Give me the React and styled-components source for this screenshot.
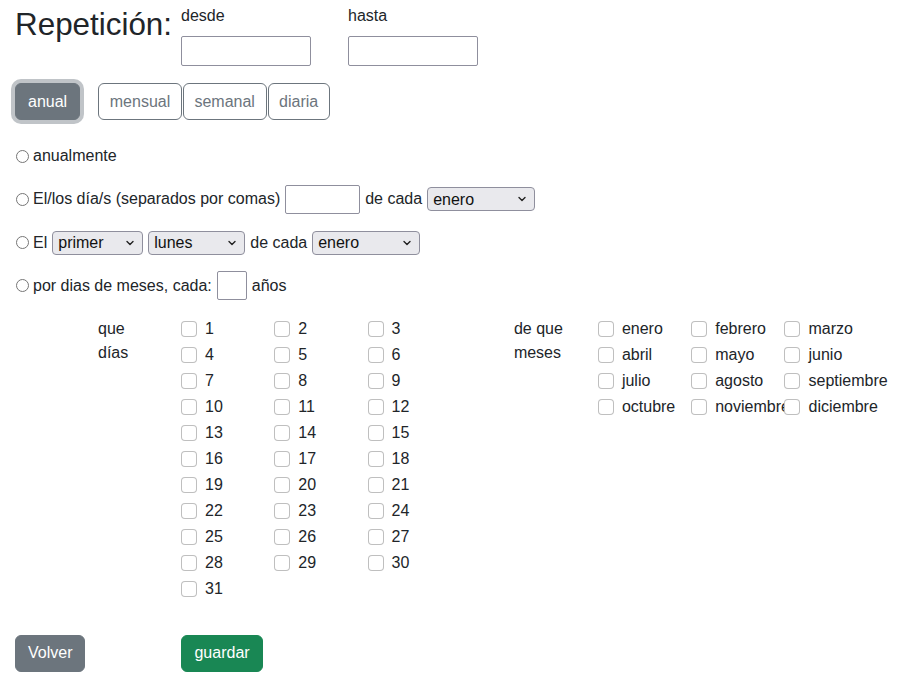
import React from 'react'
import styled, { createGlobalStyle } from 'styled-components'

const GlobalStyle = createGlobalStyle`
  html, body {
    margin: 0;
    padding: 0;
    background: #fff;
  }
  body {
    font-family: "Liberation Sans", Arial, sans-serif;
    font-size: 16px;
    line-height: 24px;
    color: #212529;
  }
`

const Page = styled.div`
  padding: 4px 15px 20px 15px;
`

const Header = styled.div`
  display: flex;
  align-items: flex-start;
`

const Title = styled.h2`
  margin: 2px 9px 0 0;
  font-size: 31.4px;
  line-height: 37px;
  font-weight: 400;
`

const Field = styled.div`
  display: flex;
  flex-direction: column;
  margin-right: 37px;
`

const FieldLabel = styled.label`
  line-height: 24px;
  margin-bottom: 8px;
`

const TextInput = styled.input`
  box-sizing: border-box;
  width: ${p => p.$w || 130}px;
  height: ${p => p.$h || 30}px;
  border: 1px solid #8f8f9d;
  border-radius: 2px;
  padding: 1px 2px;
  font-family: inherit;
  font-size: 16px;
  background: #fff;
`

const Tabs = styled.div`
  display: flex;
  align-items: center;
  margin-top: 17px;
`

const Btn = styled.button`
  box-sizing: border-box;
  height: 37px;
  padding: 0 ${p => (p.$outline ? 10.6 : 12)}px;
  font-family: inherit;
  font-size: 16px;
  line-height: 24px;
  border-radius: 6px;
  border: 1px solid ${p => p.$color};
  background: ${p => (p.$outline ? '#fff' : p.$color)};
  color: ${p => (p.$outline ? p.$color : '#fff')};
  box-shadow: ${p => (p.$focus ? '0 0 0 4px rgba(130,138,145,.5)' : 'none')};
  cursor: pointer;
`

const TabGroup = styled.div`
  display: flex;
  gap: 1px;
  margin-left: 18px;
`

const Options = styled.div`
  display: flex;
  flex-direction: column;
  gap: 13.3px;
  margin-top: 21px;
`

const OptionRow = styled.div`
  display: flex;
  align-items: center;
  gap: 5px;
  height: 30px;
`

const Radio = styled.input.attrs({ type: 'radio' })`
  appearance: none;
  box-sizing: border-box;
  width: 13px;
  height: 13px;
  margin: 0 -1px 0 1px;
  border: 1px solid #767676;
  border-radius: 50%;
  background: #fff;
`

const SelectWrap = styled.span`
  position: relative;
  display: inline-flex;
  width: ${p => p.$w}px;
  height: 24px;
`

const Select = styled.select`
  appearance: none;
  box-sizing: border-box;
  width: 100%;
  height: 24px;
  padding: 0 20px 0 5px;
  font-family: inherit;
  font-size: 16px;
  color: #111;
  background: #e9e9ed;
  border: 1px solid #8f8f9d;
  border-radius: 4px;
`

const Chevron = styled.svg`
  position: absolute;
  right: 9px;
  top: 9px;
  width: 8px;
  height: 6px;
  pointer-events: none;
`

const Checks = styled.div`
  display: flex;
  margin-top: 15px;
  margin-left: 83px;
`

const CheckBlock = styled.div`
  display: grid;
  grid-template-columns: ${p => p.$label}px repeat(3, 93.3px);
  grid-auto-rows: 26px;
  margin-right: ${p => p.$mr || 0}px;
`

const BlockLabel = styled.div`
  grid-row: 1 / span 3;
  grid-column: 1;
  width: 56px;
  line-height: 24px;
  margin-top: 1px;
`

const CheckItem = styled.label`
  display: flex;
  align-items: center;
  white-space: nowrap;
  height: 26px;
`

const Box = styled.span`
  flex: none;
  box-sizing: border-box;
  width: 16px;
  height: 16px;
  border: 1px solid rgba(0, 0, 0, 0.25);
  border-radius: 4px;
  background: #fff;
  margin-right: 8px;
`

const Footer = styled.div`
  display: flex;
  gap: 96px;
  margin-top: 33px;
`

const months = ['enero', 'febrero', 'marzo', 'abril', 'mayo', 'junio', 'julio', 'agosto', 'septiembre', 'octubre', 'noviembre', 'diciembre']
const days = Array.from({ length: 31 }, (_, i) => String(i + 1))

function Dropdown({ w, options }) {
  return (
    <SelectWrap $w={w}>
      <Select>
        {options.map(o => <option key={o}>{o}</option>)}
      </Select>
      <Chevron viewBox="0 0 8 6">
        <path d="M1 1.5 L4 4.5 L7 1.5" fill="none" stroke="#222" strokeWidth="1.4" strokeLinecap="round" strokeLinejoin="round" />
      </Chevron>
    </SelectWrap>
  )
}

function CheckGrid({ label, items, labelWidth, mr }) {
  return (
    <CheckBlock $label={labelWidth} $mr={mr}>
      <BlockLabel>{label}</BlockLabel>
      {items.map((it, i) => (
        <CheckItem key={it} style={{ gridColumn: (i % 3) + 2, gridRow: Math.floor(i / 3) + 1 }}>
          <Box />
          {it}
        </CheckItem>
      ))}
    </CheckBlock>
  )
}

export default function App() {
  return (
    <Page>
      <GlobalStyle />
      <Header>
        <Title>Repetición:</Title>
        <Field>
          <FieldLabel>desde</FieldLabel>
          <TextInput />
        </Field>
        <Field>
          <FieldLabel>hasta</FieldLabel>
          <TextInput />
        </Field>
      </Header>

      <Tabs>
        <Btn $color="#6c757d" $focus>anual</Btn>
        <TabGroup>
          <Btn $color="#6c757d" $outline>mensual</Btn>
          <Btn $color="#6c757d" $outline>semanal</Btn>
          <Btn $color="#6c757d" $outline>diaria</Btn>
        </TabGroup>
      </Tabs>

      <Options>
        <OptionRow>
          <Radio name="rep" />
          <span>anualmente</span>
        </OptionRow>
        <OptionRow>
          <Radio name="rep" />
          <span>El/los día/s (separados por comas)</span>
          <TextInput $w={75} $h={29} />
          <span>de cada</span>
          <Dropdown w={108} options={months} />
        </OptionRow>
        <OptionRow>
          <Radio name="rep" />
          <span>El</span>
          <Dropdown w={91} options={['primer', 'segundo', 'tercer', 'cuarto', 'último']} />
          <Dropdown w={97} options={['lunes', 'martes', 'miércoles', 'jueves', 'viernes', 'sábado', 'domingo']} />
          <span>de cada</span>
          <Dropdown w={108} options={months} />
        </OptionRow>
        <OptionRow>
          <Radio name="rep" />
          <span>por dias de meses, cada:</span>
          <TextInput $w={30} $h={29} />
          <span>años</span>
        </OptionRow>
      </Options>

      <Checks>
        <CheckGrid label="que días" items={days} labelWidth={83} mr={53} />
        <CheckGrid label="de que meses" items={months} labelWidth={84} />
      </Checks>

      <Footer>
        <Btn $color="#6c757d">Volver</Btn>
        <Btn $color="#198754">guardar</Btn>
      </Footer>
    </Page>
  )
}
